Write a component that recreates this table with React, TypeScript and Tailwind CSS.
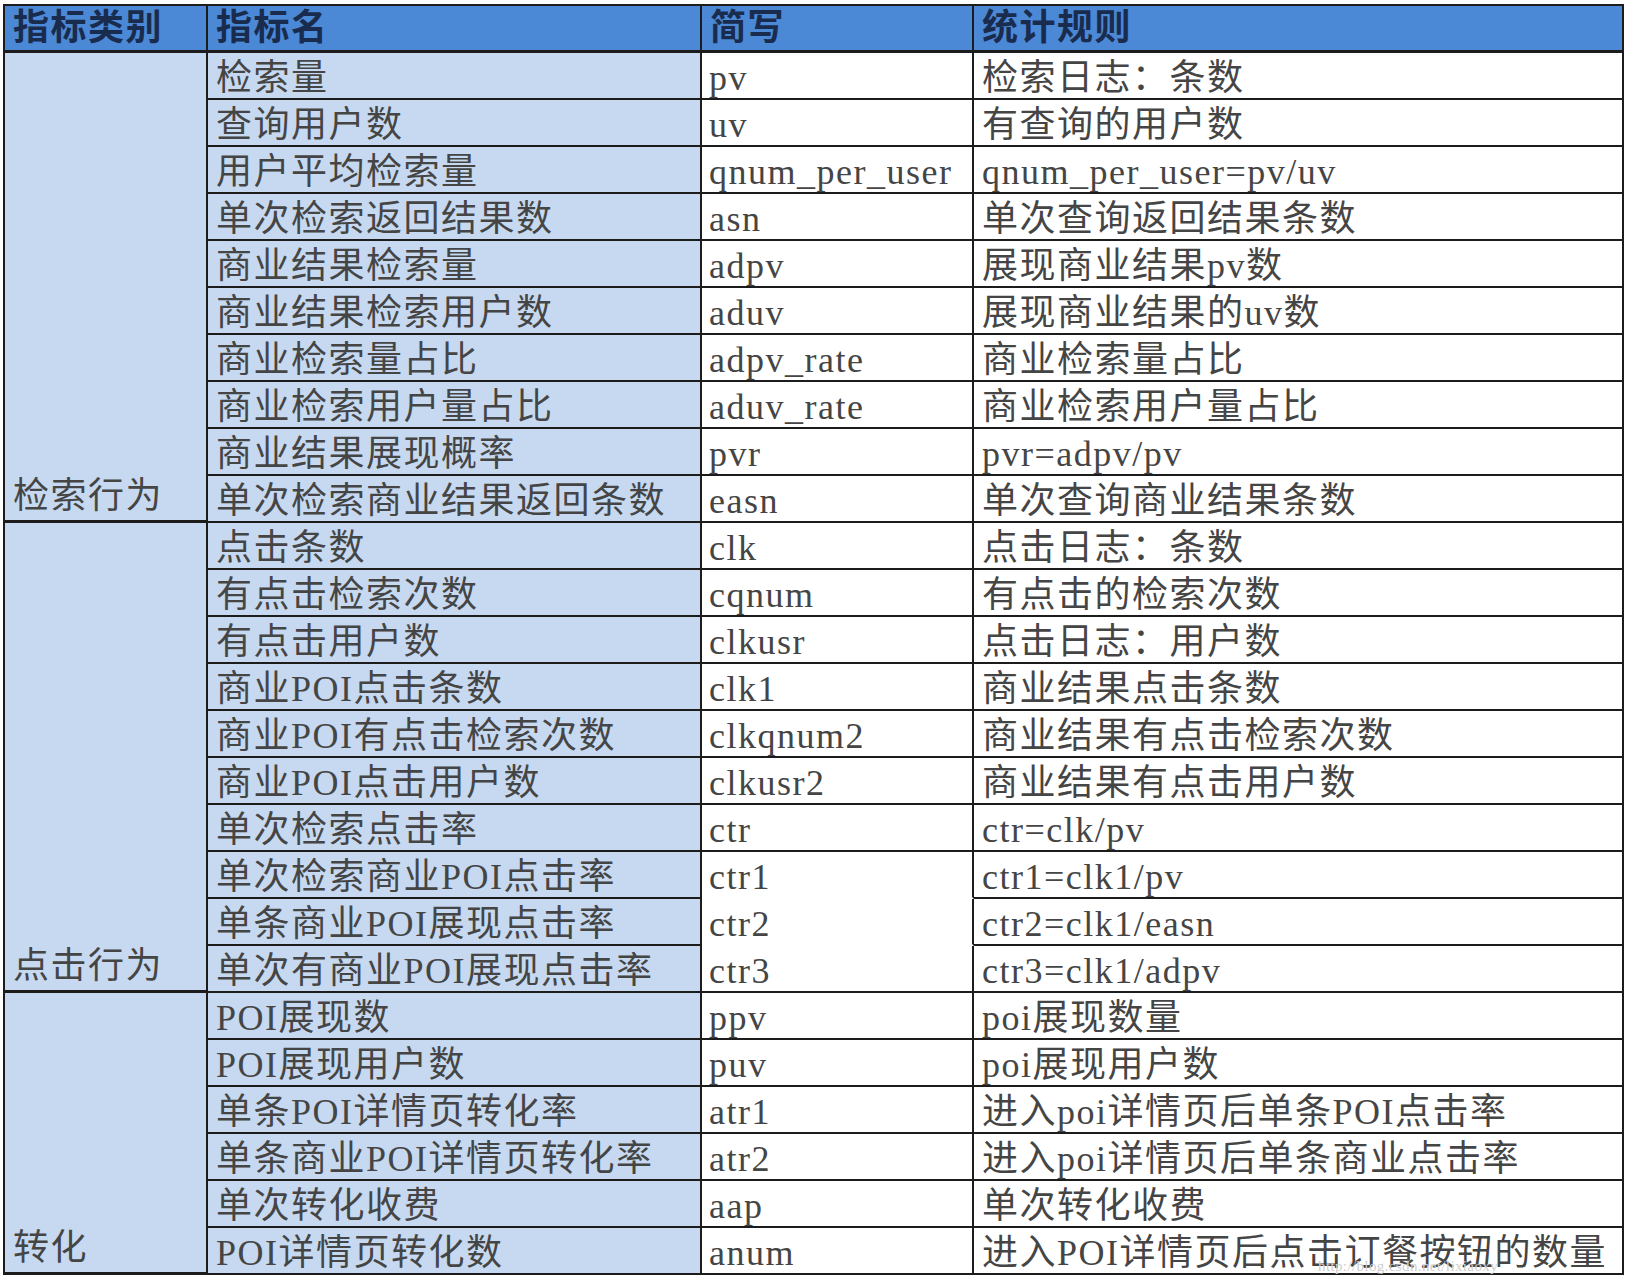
type Row = [string, string, string];

interface Group {
  name: string;
  rows: Row[];
}

const groups: Group[] = [
  {
    name: '检索行为',
    rows: [
      ['检索量', 'pv', '检索日志：条数'],
      ['查询用户数', 'uv', '有查询的用户数'],
      ['用户平均检索量', 'qnum_per_user', 'qnum_per_user=pv/uv'],
      ['单次检索返回结果数', 'asn', '单次查询返回结果条数'],
      ['商业结果检索量', 'adpv', '展现商业结果pv数'],
      ['商业结果检索用户数', 'aduv', '展现商业结果的uv数'],
      ['商业检索量占比', 'adpv_rate', '商业检索量占比'],
      ['商业检索用户量占比', 'aduv_rate', '商业检索用户量占比'],
      ['商业结果展现概率', 'pvr', 'pvr=adpv/pv'],
      ['单次检索商业结果返回条数', 'easn', '单次查询商业结果条数'],
    ],
  },
  {
    name: '点击行为',
    rows: [
      ['点击条数', 'clk', '点击日志：条数'],
      ['有点击检索次数', 'cqnum', '有点击的检索次数'],
      ['有点击用户数', 'clkusr', '点击日志：用户数'],
      ['商业POI点击条数', 'clk1', '商业结果点击条数'],
      ['商业POI有点击检索次数', 'clkqnum2', '商业结果有点击检索次数'],
      ['商业POI点击用户数', 'clkusr2', '商业结果有点击用户数'],
      ['单次检索点击率', 'ctr', 'ctr=clk/pv'],
      ['单次检索商业POI点击率', 'ctr1', 'ctr1=clk1/pv'],
      ['单条商业POI展现点击率', 'ctr2', 'ctr2=clk1/easn'],
      ['单次有商业POI展现点击率', 'ctr3', 'ctr3=clk1/adpv'],
    ],
  },
  {
    name: '转化',
    rows: [
      ['POI展现数', 'ppv', 'poi展现数量'],
      ['POI展现用户数', 'puv', 'poi展现用户数'],
      ['单条POI详情页转化率', 'atr1', '进入poi详情页后单条POI点击率'],
      ['单条商业POI详情页转化率', 'atr2', '进入poi详情页后单条商业点击率'],
      ['单次转化收费', 'aap', '单次转化收费'],
      ['POI详情页转化数', 'anum', '进入POI详情页后点击订餐按钮的数量'],
    ],
  },
];

// the abbreviation column has no dividers inside the ctr1..ctr3 block
const noLineBelow = new Set(['ctr1', 'ctr2']);

export default function App() {
  return (
    <div className="relative min-h-screen bg-white pl-[3px] pt-[4px]">
      <table
        className="table-fixed border-separate border-spacing-0 border-l-2 border-t-2 border-[#1c1c1c] text-[36px] leading-none tracking-[1.5px] text-[#454545]"
        style={{ fontFamily: '"Liberation Serif", "Noto Sans CJK SC", serif' }}
      >
        <colgroup>
          <col className="w-[203px]" />
          <col className="w-[494px]" />
          <col className="w-[272px]" />
          <col className="w-[650px]" />
        </colgroup>
        <thead>
          <tr className="h-[47px] bg-[#4b88d6] font-bold text-[#1a2c4e]">
            <th className="border-b-[3px] border-r-2 border-[#1c1c1c] pl-2 text-left font-bold">指标类别</th>
            <th className="border-b-[3px] border-r-2 border-[#1c1c1c] pl-2 text-left font-bold">指标名</th>
            <th className="border-b-[3px] border-r-2 border-[#1c1c1c] pl-2 text-left font-bold">简写</th>
            <th className="border-b-[3px] border-r-2 border-[#1c1c1c] pl-2 text-left font-bold">统计规则</th>
          </tr>
        </thead>
        <tbody>
          {groups.map((g) =>
            g.rows.map(([name, abbr, rule], i) => (
              <tr key={abbr} className="h-[47px]">
                {i === 0 && (
                  <td
                    rowSpan={g.rows.length}
                    className="border-b-[3px] border-r-2 border-[#1c1c1c] bg-[#c6d9f0] pb-[6px] pl-2 align-bottom"
                  >
                    {g.name}
                  </td>
                )}
                <td className="border-b-2 border-r-2 border-[#1c1c1c] bg-[#c6d9f0] pl-2 pt-1">{name}</td>
                <td
                  className={
                    noLineBelow.has(abbr)
                      ? 'border-b-2 border-r-2 border-b-white border-r-[#1c1c1c] bg-white pl-[7px] pt-1'
                      : 'border-b-2 border-r-2 border-[#1c1c1c] bg-white pl-[7px] pt-1'
                  }
                >
                  {abbr}
                </td>
                <td className="border-b-2 border-r-2 border-[#1c1c1c] bg-white pl-2 pt-1">{rule}</td>
              </tr>
            ))
          )}
        </tbody>
      </table>
      <span className="absolute left-[1318px] top-[1255px] font-['Liberation_Serif'] text-[15px] tracking-wide text-[#cfcfcf]">
        http://blog.csdn.net/lixiaoxy
      </span>
    </div>
  );
}
